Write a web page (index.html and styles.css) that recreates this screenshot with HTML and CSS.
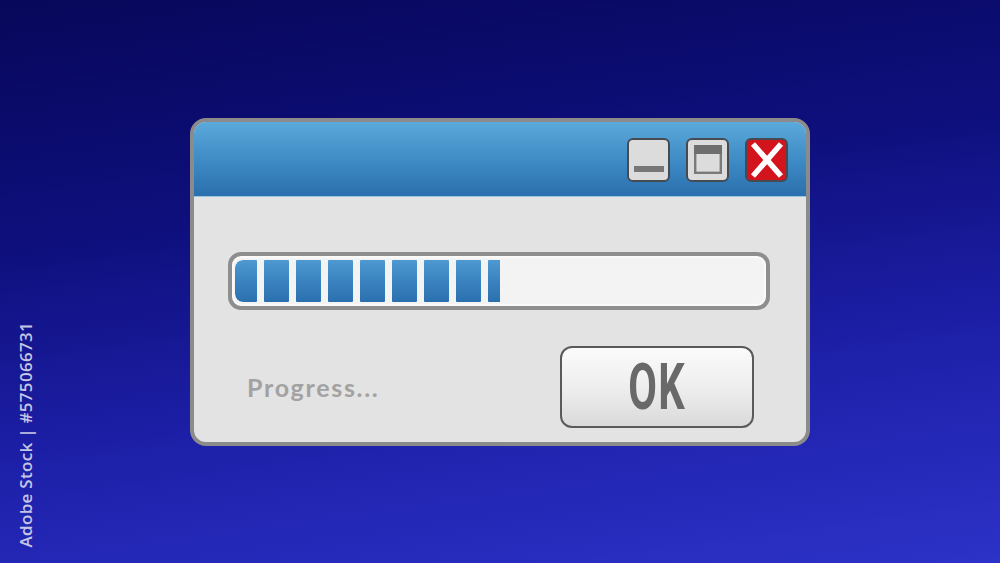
FILE: index.html
```html
<!DOCTYPE html>
<html>
  <head>
    <meta charset="UTF-8">
    <title>Progress</title>
    <link rel="stylesheet" href="styles.css">
  </head>
  <body>
    <div class="stage">
      <div class="window">
        <div class="titlebar">
          <div class="title-btn">
            <svg width="39" height="40" viewBox="0 0 39 40">
              <rect x="5" y="26" width="30" height="6" fill="#777"/>
            </svg>
          </div>
          <div class="title-btn">
            <svg width="39" height="40" viewBox="0 0 39 40">
              <rect x="7.2" y="6.2" width="25.6" height="26.6" fill="none" stroke="#7a7a7a" stroke-width="2.4"/>
              <rect x="6" y="5" width="28" height="9" fill="#6e6e6e"/>
            </svg>
          </div>
          <div class="title-btn close">
            <svg width="39" height="40" viewBox="0 0 39 40">
              <path d="M6 4 L34 36 M34 4 L6 36" stroke="#fff" stroke-width="5.5"/>
            </svg>
          </div>
        </div>

        <div class="content">
          <div class="track">
            <div class="fill">
              <span class="seg first"></span>
              <span class="seg"></span>
              <span class="seg"></span>
              <span class="seg"></span>
              <span class="seg"></span>
              <span class="seg"></span>
              <span class="seg"></span>
              <span class="seg"></span>
              <span class="seg"></span>
            </div>
          </div>

          <div class="footer">
            <p class="status">Progress...</p>
            <button class="ok-btn"><span>OK</span></button>
          </div>
        </div>
      </div>
    </div>

    <div class="side-label">Adobe Stock | #575066731</div>
  </body>
</html>
```

FILE: styles.css
```css
html, body {
  margin: 0;
  height: 100%;
}

body {
  background: linear-gradient(172deg, #07075a 0%, #0e0f7c 35%, #1c1fa6 65%, #2d32c8 100%);
  font-family: "Lato", "Open Sans", sans-serif;
  overflow: hidden;
}

.stage {
  height: 100vh;
  display: flex;
  align-items: center;
  justify-content: center;
}

.window {
  width: 620px;
  height: 328px;
  box-sizing: border-box;
  border: 4px solid #8b8b8b;
  border-radius: 16px;
  background: #e3e3e3;
  overflow: hidden;
  display: flex;
  flex-direction: column;
}

/* title bar */
.titlebar {
  height: 75px;
  box-sizing: border-box;
  padding: 16px 18px 0 0;
  display: flex;
  justify-content: flex-end;
  gap: 16px;
  background: linear-gradient(to bottom, #5ca9db 0%, #3f8cc6 50%, #2a6fad 100%);
  border-bottom: 1px solid #9cc3e0;
}

.title-btn {
  width: 43px;
  height: 44px;
  box-sizing: border-box;
  border: 2px solid #464b52;
  border-radius: 6px;
  background: #dcdcdc;
}

.title-btn svg {
  display: block;
}

.title-btn.close {
  background: #d3141d;
}

/* body */
.content {
  flex: 1;
  padding: 55px 36px 0 34px;
}

.track {
  height: 58px;
  box-sizing: border-box;
  border: 4px solid #8e8e8e;
  border-radius: 13px;
  background: #f3f3f3;
  padding: 4px 3px;
  box-shadow: inset 0 0 0 2px #fafafa;
}

.fill {
  width: 265px;
  height: 42px;
  display: flex;
  gap: 7px;
  overflow: hidden;
  border-radius: 8px 0 0 8px;
}

.seg {
  flex: none;
  width: 25px;
  height: 100%;
  background: linear-gradient(to bottom, #4e99d1 0%, #3a83c0 50%, #2b70ae 100%);
  border-radius: 1px;
}

.seg.first {
  width: 22px;
  border-radius: 8px 1px 1px 8px;
}

.footer {
  margin-top: 36px;
  display: flex;
  align-items: center;
  justify-content: space-between;
}

.status {
  margin: 0 0 0 19px;
  font-size: 25px;
  font-weight: 700;
  color: #a2a2a2;
  letter-spacing: 1.7px;
}

.ok-btn {
  width: 194px;
  height: 82px;
  margin-right: 16px;
  box-sizing: border-box;
  border: 2px solid #5a5a5a;
  border-radius: 12px;
  background: linear-gradient(to bottom, #fbfbfb 0%, #eeeeee 50%, #dadada 100%);
  display: flex;
  align-items: center;
  justify-content: center;
  padding: 0;
}

.ok-btn span {
  display: inline-block;
  font-family: "Roboto", sans-serif;
  font-weight: 700;
  font-size: 65px;
  color: #696969;
  letter-spacing: 2px;
  transform: scaleX(0.64);
}

/* watermark label on the left edge */
.side-label {
  position: absolute;
  left: 14px;
  bottom: 16px;
  writing-mode: vertical-rl;
  transform: rotate(180deg);
  font-family: "Open Sans", sans-serif;
  font-weight: 600;
  font-size: 17px;
  color: #c4c6e6;
  letter-spacing: 0.3px;
}
```
